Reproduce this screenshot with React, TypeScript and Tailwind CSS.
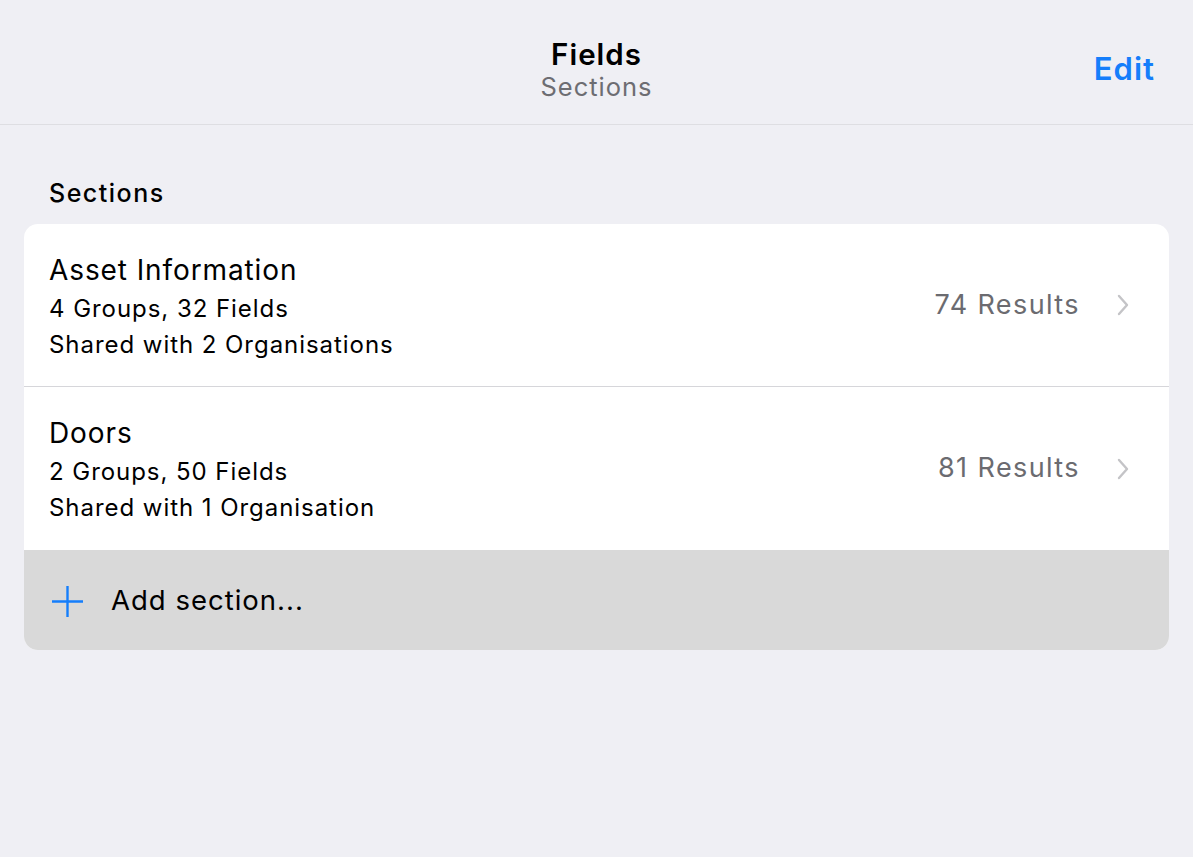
import React from "react";

function Chevron() {
  return (
    <svg width="14" height="24" viewBox="0 0 14 24" fill="none">
      <path d="M3 3l8 9-8 9" stroke="#c4c4c7" strokeWidth="2.4" strokeLinecap="round" strokeLinejoin="round" />
    </svg>
  );
}

function Row({ title, l1, l2, results, border }: { title: string; l1: string; l2: string; results: string; border?: boolean }) {
  return (
    <div className={`flex h-[163px] items-center pl-[25px] pr-[39px] ${border ? "border-b border-[#d6d6da]" : ""}`}>
      <div className="flex flex-1 flex-col pt-[2px]">
        <div className="text-[28px] leading-[40px] tracking-[0.9px] text-black">{title}</div>
        <div className="text-[24px] leading-[37px] tracking-[0.95px] text-black">{l1}</div>
        <div className="text-[24px] leading-[36px] tracking-[0.95px] text-black">{l2}</div>
      </div>
      <div className="text-[27px] tracking-[1.4px] text-[#6b6b70]">{results}</div>
      <div className="ml-[36px] flex items-center">
        <Chevron />
      </div>
    </div>
  );
}

export default function App() {
  return (
    <div className="min-h-[857px] w-full bg-[#efeff4]" style={{ fontFamily: "Inter, 'Liberation Sans', sans-serif" }}>
      <div className="relative flex h-[125px] flex-col items-center border-b border-[#dedee2] bg-[#efeff4] pt-[36px]">
        <div className="text-[29.5px] font-semibold leading-[36px] tracking-[1px] text-black">Fields</div>
        <div className="text-[25.5px] leading-[30px] tracking-[1px] text-[#6d6d72]">Sections</div>
        <div className="absolute right-[38px] top-[46px] text-[31px] font-semibold tracking-[1px] text-[#157efb]">Edit</div>
      </div>
      <div className="px-[24px] pt-[52px]">
        <div className="pl-[25px] text-[25px] font-medium leading-[32px] tracking-[1.5px] text-black">Sections</div>
        <div className="mt-[15px] overflow-hidden rounded-[14px] bg-white">
          <Row title="Asset Information" l1="4 Groups, 32 Fields" l2="Shared with 2 Organisations" results="74 Results" border />
          <Row title="Doors" l1="2 Groups, 50 Fields" l2="Shared with 1 Organisation" results="81 Results" />
          <div className="flex h-[100px] items-center bg-[#d9d9d9] pl-[27px] pt-[2px]">
            <svg width="33" height="33" viewBox="0 0 33 33">
              <path d="M16.5 1v31M1 16.5h31" stroke="#157efb" strokeWidth="2.4" />
            </svg>
            <div className="ml-[27px] text-[27.5px] tracking-[1px] text-black">Add section...</div>
          </div>
        </div>
      </div>
    </div>
  );
}
